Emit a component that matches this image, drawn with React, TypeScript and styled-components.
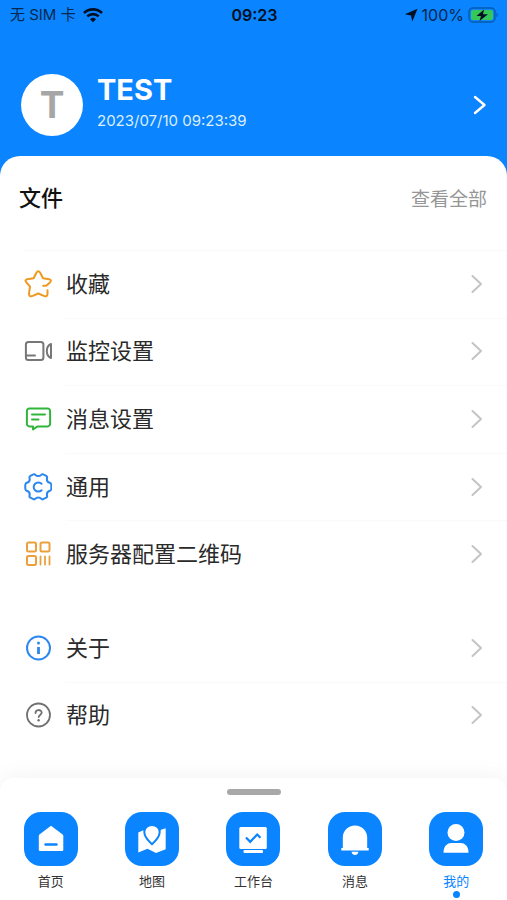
import React from 'react';
import styled, { createGlobalStyle } from 'styled-components';

const BLUE = '#0a84ff';

const GlobalStyle = createGlobalStyle`
  *, *::before, *::after { box-sizing: border-box; }
  body {
    margin: 0;
    background: ${BLUE};
    color: #2a2a2a;
    font-family: Inter, "Noto Sans CJK SC", sans-serif;
  }
  h1, h2, p, ul { margin: 0; padding: 0; }
  ul { list-style: none; }
  button { border: 0; padding: 0; background: none; font: inherit; color: inherit; cursor: pointer; }
  svg { display: block; flex: none; }
`;

const Screen = styled.div`
  display: flex;
  flex-direction: column;
  min-height: 100vh;
`;

const StatusBar = styled.div`
  display: grid;
  grid-template-columns: 1fr auto 1fr;
  align-items: center;
  height: 30px;
  padding: 0 8px 0 10px;
  font-size: 16px;
  line-height: 20px;
  color: #06284d;
`;

const StatusGroup = styled.div<{ $end?: boolean }>`
  display: flex;
  align-items: center;
  justify-content: ${(p) => (p.$end ? 'flex-end' : 'flex-start')};
  gap: ${(p) => (p.$end ? 4 : 7)}px;
`;

const Carrier = styled.span`
  font-size: 15px;
`;

const Clock = styled.time`
  font-weight: 600;
  color: #001022;
`;

const Profile = styled.button`
  display: flex;
  align-items: center;
  gap: 14px;
  height: 126px;
  padding: 0 20px 0 21px;
  text-align: left;
  && {
    padding-top: 23px;
    color: #fff;
  }
`;

const Avatar = styled.span`
  display: grid;
  place-items: center;
  width: 62px;
  height: 62px;
  border-radius: 50%;
  background: #fff;
  color: #a6a6a6;
  font-size: 37px;
  font-weight: 700;
  line-height: 40px;
`;

const Identity = styled.span`
  display: flex;
  flex: 1;
  flex-direction: column;
  gap: 3px;
  padding-bottom: 3px;
`;

const UserName = styled.strong`
  font-size: 29px;
  font-weight: 700;
  line-height: 32px;
`;

const LoginTime = styled.time`
  font-size: 15px;
  line-height: 24px;
  color: #dceeff;
`;

const Sheet = styled.div`
  display: flex;
  flex: 1;
  flex-direction: column;
  border-radius: 20px 20px 0 0;
  background: #fff;
`;

const Content = styled.main`
  flex: 1;
`;

const SheetHead = styled.header`
  display: flex;
  align-items: center;
  justify-content: space-between;
  height: 94px;
  padding: 0 20px 10px 19px;
`;

const SheetTitle = styled.h2`
  font-size: 22px;
  font-weight: 500;
  line-height: 32px;
  color: #111;
`;

const ViewAll = styled.button`
  && { color: #969696; }
  padding-top: 3px;
  font-size: 19px;
  line-height: 28px;
`;

const Menu = styled.ul<{ $height: number }>`
  display: grid;
  grid-auto-rows: 1fr;
  height: ${(p) => p.$height}px;
  & + & { margin-top: 26px; }
`;

const MenuItem = styled.li`
  display: flex;
  background: linear-gradient(#fafafa, #fafafa) 66px 0 / 100% 1px no-repeat;
  &:first-child { background: linear-gradient(#fafafa, #fafafa) 24px 0 / 100% 1px no-repeat; }
  ul + ul > &:first-child { background: none; }
`;

const MenuButton = styled.button`
  display: flex;
  flex: 1;
  align-items: center;
  gap: 14px;
  padding: 0 24px;
  text-align: left;
`;

const MenuLabel = styled.span`
  flex: 1;
  font-size: 22px;
  line-height: 32px;
`;

const TabBar = styled.nav`
  display: flex;
  flex-direction: column;
  align-items: center;
  height: 122px;
  padding-top: 11px;
  border-radius: 14px 14px 0 0;
  background: #fff;
  box-shadow: 0 0 24px rgba(0, 0, 0, 0.06);
  clip-path: inset(-32px 0 0 0);
`;

const Grabber = styled.div`
  width: 54px;
  height: 6px;
  border-radius: 3px;
  background: #a8a8a8;
`;

const Tabs = styled.ul`
  display: grid;
  grid-template-columns: repeat(5, 1fr);
  width: 100%;
  margin-top: 17px;
`;

const TabItem = styled.li`
  display: flex;
  justify-content: center;
`;

const TabButton = styled.button<{ $active: boolean }>`
  display: flex;
  flex-direction: column;
  align-items: center;
  && { color: ${(p) => (p.$active ? BLUE : '#333')}; }
`;

const TabTile = styled.span`
  display: grid;
  place-items: center;
  width: 54px;
  height: 54px;
  border-radius: 17px;
  background: ${BLUE};
`;

const TabLabel = styled.span`
  margin-top: 5px;
  font-size: 13px;
  line-height: 20px;
`;

const ActiveDot = styled.span`
  width: 7px;
  height: 7px;
  border-radius: 50%;
  background: ${BLUE};
`;

const Chevron = ({ color = '#c4c4c4', wide = false }: { color?: string; wide?: boolean }) => (
  <svg width={wide ? 14 : 12} height="20" viewBox={wide ? '0 0 14 20' : '0 0 12 20'} fill="none" stroke={color} strokeWidth={wide ? 2.4 : 2}>
    <path d={wide ? 'M2 2l9.5 8L2 18' : 'M1.5 2l8.5 8-8.5 8'} strokeLinecap="round" strokeLinejoin="round" />
  </svg>
);

const Outline = ({ color, children }: { color: string; children: React.ReactNode }) => (
  <svg width="28" height="28" viewBox="0 0 28 28" fill="none" stroke={color} strokeWidth="2" strokeLinecap="round" strokeLinejoin="round">
    {children}
  </svg>
);

const StarIcon = () => (
  <Outline color="#ee9a20">
    <path d="M19.200 15.800h3l4-3.600Q28 9.800 25.200 9.200L19 8.300 16.200 2.700Q14.300-.2 12.400 2.700L9.600 8.300 3.200 9.200Q.4 9.800 2.200 12.200L6 16.600 5 23.600Q4.900 27 8 26.100L14.300 23.500 20.400 26.100Q23.600 27 23.500 23.600V20.200" />
  </Outline>
);

const CameraIcon = () => (
  <Outline color="#777">
    <rect x="1.900" y="5" width="17.500" height="18" rx="2.500" />
    <path d="M2.500 18.500h8.500M27 7v14c-2.800-1.200-4.200-4-4.200-7s1.400-5.800 4.200-7z" />
  </Outline>
);

const ChatIcon = () => (
  <Outline color="#2fb53a">
    <path d="M5.400 3.400h18.200a2.500 2.500 0 0 1 2.500 2.500v13a2.500 2.500 0 0 1-2.500 2.500H13.500L9 24.500v-3.100H5.400a2.500 2.500 0 0 1-2.500-2.500v-13a2.500 2.500 0 0 1 2.500-2.500z" />
    <path d="M8 9.500h13M8 14.500h6.500" />
  </Outline>
);

const GearIcon = () => (
  <Outline color="#2b87f0">
    <path d="M11.400 1.900c1.400 1.600 4.400 1.600 5.800 0 .5-.6 1.300-.8 2-.5l3 1.500c.8.400 1.100 1.100.9 1.900-.6 2.300.5 4.300 2.700 5 .8.300 1.200.800 1.400 1.600.2 1.500.2 3.300 0 4.800-.2.800-.6 1.300-1.400 1.600-2.200.7-3.300 2.700-2.700 5 .2.800-.1 1.500-.9 1.900l-3 1.500c-.7.3-1.500.1-2-.5-1.400-1.600-4.400-1.600-5.800 0-.5.6-1.300.8-2 .5l-3-1.500c-.8-.4-1.100-1.100-.9-1.900.6-2.300-.5-4.300-2.700-5-.8-.3-1.200-.8-1.400-1.600-.2-1.500-.2-3.300 0-4.800.2-.8.600-1.300 1.400-1.600 2.200-.7 3.300-2.700 2.700-5-.2-.8.100-1.500.9-1.900l3-1.500c.7-.3 1.500-.1 2 .5z" />
    <path d="M17.600 10.800a4.600 4.600 0 1 0 0 6.400" />
  </Outline>
);

const QrIcon = () => (
  <Outline color="#eba03c">
    <rect x="3" y="2.500" width="9" height="9" rx="1.500" />
    <rect x="16.500" y="2.500" width="9" height="9" rx="1.500" />
    <rect x="3" y="16" width="9" height="9" rx="1.500" />
    <path d="M16.500 16.500v8M21 16.500v8M25.500 16.500v8" strokeWidth="1.800" />
  </Outline>
);

const InfoIcon = () => (
  <Outline color="#2b87f0">
    <circle cx="14.500" cy="14" r="11.500" />
    <path d="M14.500 13v7" strokeWidth="2.800" strokeLinecap="butt" />
    <circle cx="14.500" cy="9" r="1.500" fill="#2b87f0" stroke="none" />
  </Outline>
);

const HelpIcon = () => (
  <Outline color="#707070">
    <circle cx="14.500" cy="14" r="11.500" strokeWidth="1.800" />
    <path d="M11.500 12c0-4 6.200-3.800 6.200-.4 0 2.200-3 2.400-3 4.400" strokeWidth="1.800" />
    <circle cx="14.600" cy="19.300" r="1.200" fill="#707070" stroke="none" />
  </Outline>
);

const WifiIcon = () => (
  <svg width="20" height="16" viewBox="0 0 20 16" fill="none" stroke="#001022" strokeWidth="2.600">
    <path d="M1 6a13 13 0 0 1 18 0M4.300 9.400a8.300 8.300 0 0 1 11.400 0" />
    <path d="M10 15.300l-3-3.100a4.300 4.300 0 0 1 6 0z" fill="#001022" stroke="none" />
  </svg>
);

const LocationIcon = () => (
  <svg width="14" height="14" viewBox="0 0 14 14" fill="#001022">
    <path d="M13.500.8L8.300 13.500 7 7.500.8 6.200z" />
  </svg>
);

const BatteryIcon = () => (
  <svg width="31" height="16" viewBox="0 0 31 16">
    <rect x="1" y="1" width="26" height="14" rx="4" fill="none" stroke="#075aae" strokeWidth="1.400" />
    <rect x="3" y="3" width="22" height="10" rx="2" fill="#35c759" />
    <path d="M28.500 5.800c1.700.5 1.700 3.900 0 4.400z" fill="#075aae" />
    <path d="M16 2.500L8.500 9H13l-1.500 5L20 7.200h-5z" fill="#001022" />
  </svg>
);

const Glyph = ({ children }: { children: React.ReactNode }) => (
  <svg width="32" height="32" viewBox="0 0 32 32" fill="#fff">
    {children}
  </svg>
);

const HomeGlyph = () => (
  <Glyph>
    <path d="M16 2.800l11.300 8.500q1 .8 1 2v13.500q0 1.200-1.200 1.200H5q-1.200 0-1.200-1.200V13.300q0-1.200 1-2z" />
    <path d="M10.500 21.500h11" stroke={BLUE} strokeWidth="2.400" strokeLinecap="round" />
  </Glyph>
);

const MapGlyph = () => (
  <Glyph>
    <path d="M2.300 9.500l5-2.300 8.700 14 9-14.500 4.700-1.500v21L20 30l-8.500-4.300-9.200 3.800z" />
    <path d="M16 2c4.400 0 7.700 3 7.700 7 0 4.200-3.500 8.500-7.700 12.200C11.800 17.500 8.300 13.200 8.300 9c0-4 3.300-7 7.700-7z" stroke={BLUE} strokeWidth="2" />
  </Glyph>
);

const WorkGlyph = () => (
  <Glyph>
    <rect x="2.300" y="4" width="27.500" height="22" rx="1.500" />
    <rect x="6.500" y="27" width="19.500" height="3" rx="1" />
    <path d="M9 14.500l4.200 4.300 7-7.300 3.300 3.200" fill="none" stroke={BLUE} strokeWidth="2.200" />
  </Glyph>
);

const BellGlyph = () => (
  <Glyph>
    <path d="M3.800 25V14.500C3.800 7.500 9.300 2.500 16 2.500s12.200 5 12.200 12V25h1.500v2.500H2.300V25z" />
    <path d="M12.500 28.700h7c-.5 2.300-1.800 3.300-3.500 3.300s-3-1-3.500-3.300z" />
  </Glyph>
);

const PersonGlyph = () => (
  <Glyph>
    <circle cx="16" cy="9.500" r="8.500" />
    <path d="M3.500 29.800c0-6.500 3.500-9.800 8-9.800h9c4.500 0 8 3.300 8 9.800z" />
  </Glyph>
);

type Entry = { label: string; Icon: () => React.JSX.Element };

const fileEntries: Entry[] = [
  { label: '收藏', Icon: StarIcon },
  { label: '监控设置', Icon: CameraIcon },
  { label: '消息设置', Icon: ChatIcon },
  { label: '通用', Icon: GearIcon },
  { label: '服务器配置二维码', Icon: QrIcon },
];

const supportEntries: Entry[] = [
  { label: '关于', Icon: InfoIcon },
  { label: '帮助', Icon: HelpIcon },
];

const tabs: Entry[] = [
  { label: '首页', Icon: HomeGlyph },
  { label: '地图', Icon: MapGlyph },
  { label: '工作台', Icon: WorkGlyph },
  { label: '消息', Icon: BellGlyph },
  { label: '我的', Icon: PersonGlyph },
];

const MenuList = ({ entries, height }: { entries: Entry[]; height: number }) => (
  <Menu $height={height}>
    {entries.map(({ label, Icon }) => (
      <MenuItem key={label}>
        <MenuButton type="button">
          <Icon />
          <MenuLabel>{label}</MenuLabel>
          <Chevron />
        </MenuButton>
      </MenuItem>
    ))}
  </Menu>
);

export default function App() {
  const [active, setActive] = React.useState('我的');
  return (
    <>
      <GlobalStyle />
      <Screen lang="zh-CN">
        <StatusBar>
          <StatusGroup>
            <Carrier>无 SIM 卡</Carrier>
            <WifiIcon />
          </StatusGroup>
          <Clock>09:23</Clock>
          <StatusGroup $end>
            <LocationIcon />
            <span>100%</span>
            <BatteryIcon />
          </StatusGroup>
        </StatusBar>
        <Profile type="button">
          <Avatar>T</Avatar>
          <Identity>
            <UserName>TEST</UserName>
            <LoginTime>2023/07/10 09:23:39</LoginTime>
          </Identity>
          <Chevron color="#fff" wide />
        </Profile>
        <Sheet>
          <Content>
            <SheetHead>
              <SheetTitle>文件</SheetTitle>
              <ViewAll type="button">查看全部</ViewAll>
            </SheetHead>
            <MenuList entries={fileEntries} height={338} />
            <MenuList entries={supportEntries} height={135} />
          </Content>
          <TabBar>
            <Grabber />
            <Tabs>
              {tabs.map(({ label, Icon }) => (
                <TabItem key={label}>
                  <TabButton type="button" $active={label === active} onClick={() => setActive(label)}>
                    <TabTile>
                      <Icon />
                    </TabTile>
                    <TabLabel>{label}</TabLabel>
                    {label === active && <ActiveDot />}
                  </TabButton>
                </TabItem>
              ))}
            </Tabs>
          </TabBar>
        </Sheet>
      </Screen>
    </>
  );
}
